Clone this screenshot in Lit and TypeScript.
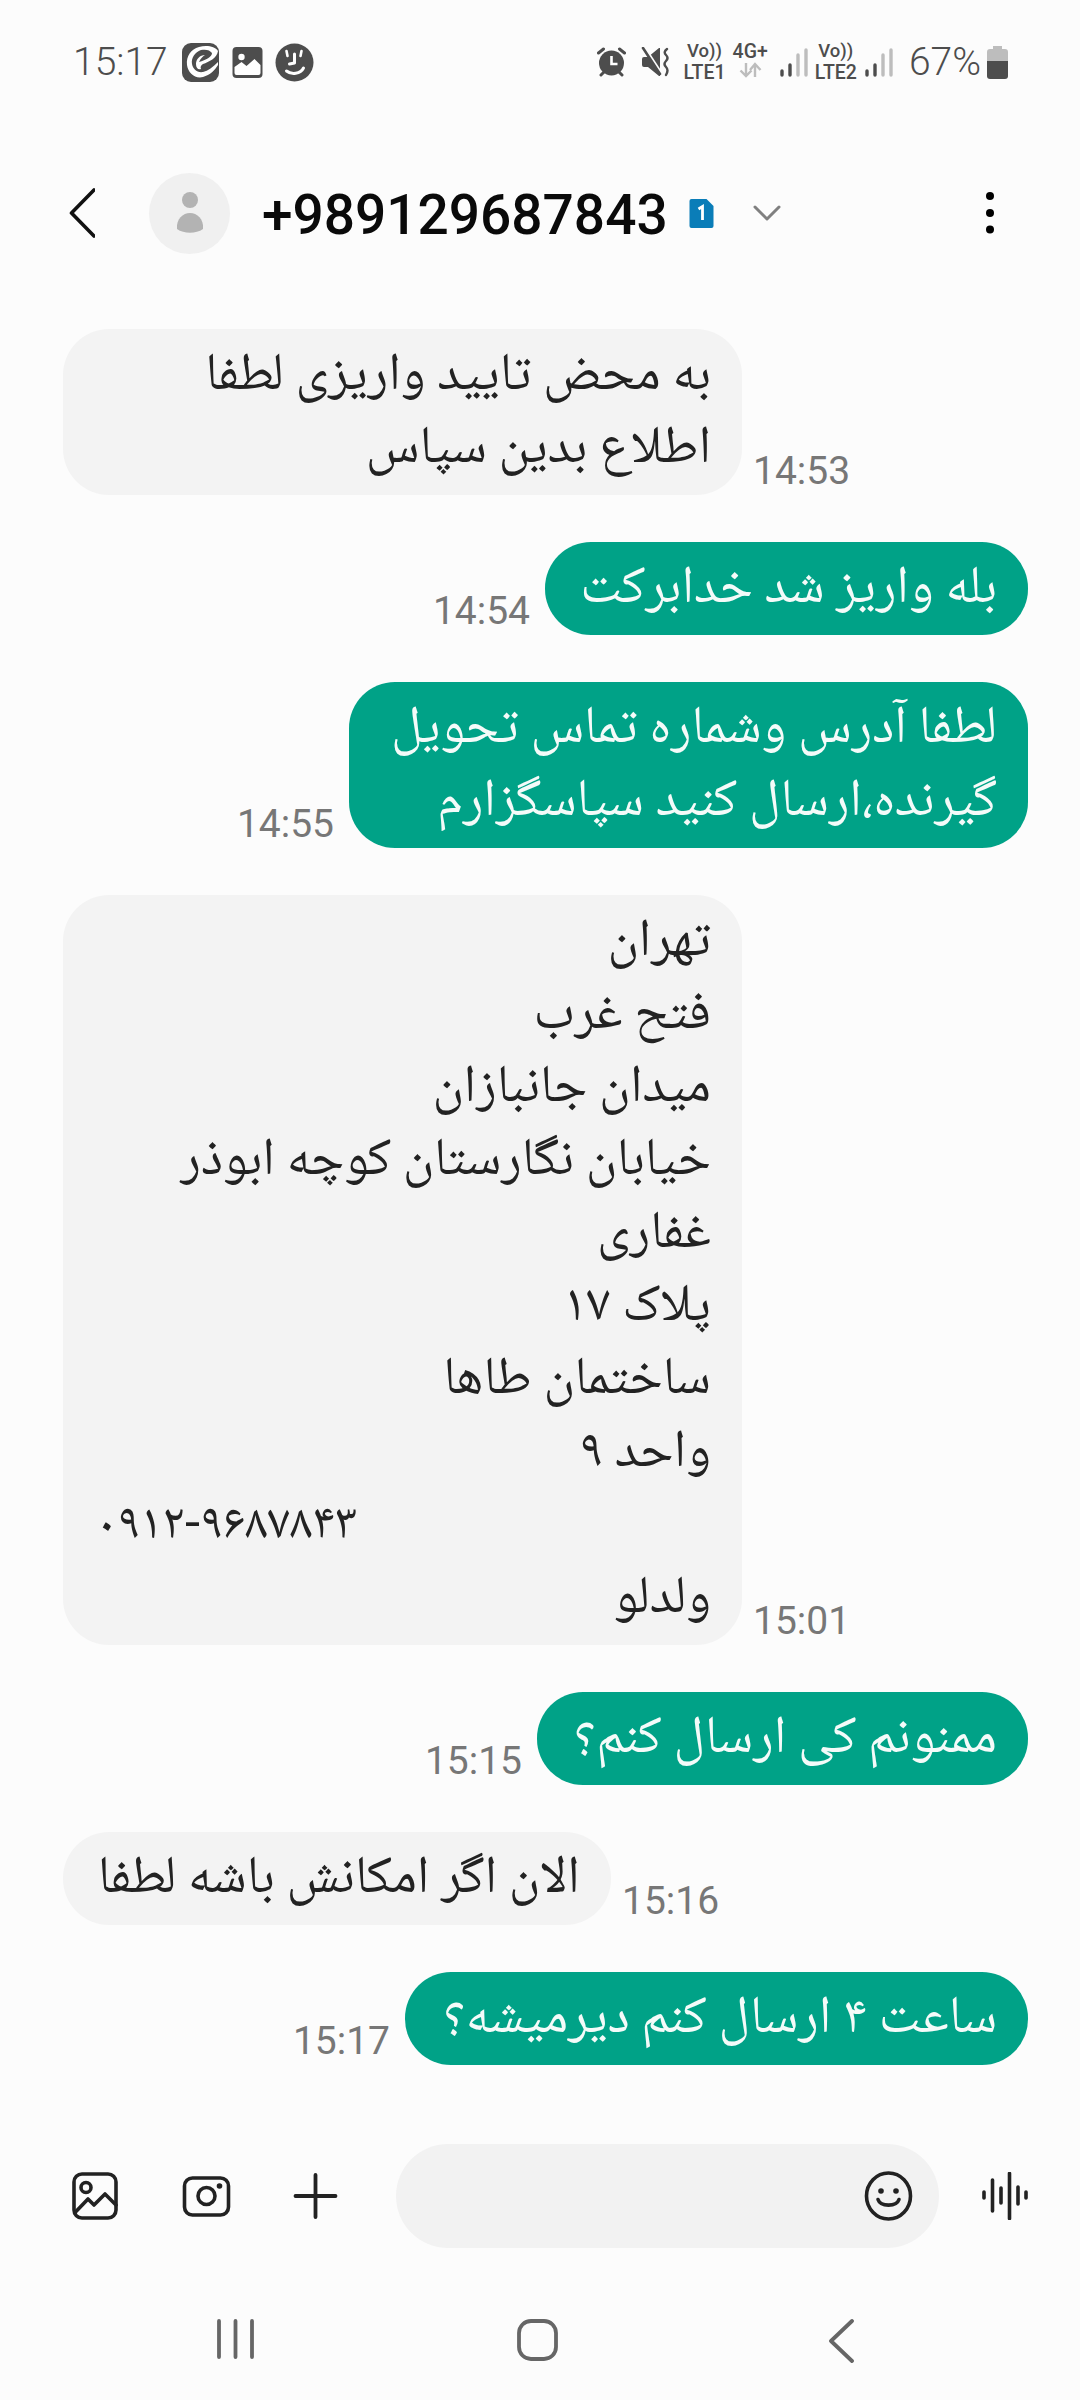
import { LitElement, html, css, svg } from "lit";
import { customElement } from "lit/decorators.js";

interface Msg { out: boolean; time: string; width: number; lines: string[]; }

const MSGS: Msg[] = [
  { out: false, time: "14:53", width: 679, lines: ["به محض تایید واریزی لطفا", "اطلاع بدین سپاس"] },
  { out: true, time: "14:54", width: 483, lines: ["بله واریز شد خدابرکت"] },
  { out: true, time: "14:55", width: 679, lines: ["لطفا آدرس وشماره تماس تحویل", "گیرنده،ارسال کنید سپاسگزارم"] },
  { out: false, time: "15:01", width: 679, lines: ["تهران", "فتح غرب", "میدان جانبازان", "خیابان نگارستان کوچه ابوذر", "غفاری", "پلاک ۱۷", "ساختمان طاها", "واحد ۹", "\u200e۰۹۱۲-۹۶۸۷۸۴۳", "ولدلو"] },
  { out: true, time: "15:15", width: 491, lines: ["ممنونم کی ارسال کنم؟"] },
  { out: false, time: "15:16", width: 548, lines: ["الان اگر امکانش باشه لطفا"] },
  { out: true, time: "15:17", width: 623, lines: ["ساعت ۴ ارسال کنم دیرمیشه؟"] },
];

const signal = svg`<svg width="28" height="30" viewBox="0 0 28 30">
  <g stroke-width="3.4" stroke-linecap="round" fill="none">
    <path d="M2 28v-4" stroke="#4d4d4d"/><path d="M10 28v-10" stroke="#4d4d4d"/>
    <path d="M18 28V8" stroke="#bdbdbd"/><path d="M26 28V3" stroke="#bdbdbd"/>
  </g></svg>`;

@customElement("app-root")
export class AppRoot extends LitElement {
  static styles = css`
    :host { display: block; width: 1080px; height: 2400px; background: #fcfcfc; font-family: Roboto, "Noto Sans", sans-serif; overflow: hidden; }
    .page { display: flex; flex-direction: column; height: 2400px; }
    svg { display: block; flex: none; }
    .status { height: 124px; flex: none; display: flex; align-items: center; padding: 0 72px 0 73px; box-sizing: border-box; color: #4d4d4d; }
    .clock { font-size: 39px; font-weight: 300; line-height: 40px; margin-right: 13px; }
    .sleft { display: flex; align-items: center; gap: 12px; }
    .sright { display: flex; align-items: center; margin-left: auto; }
    .stack { display: flex; flex-direction: column; align-items: center; font-weight: 500; font-size: 19.5px; line-height: 21px; height: 42px; white-space: nowrap; }
    .vo { font-size: 18.5px; }
    .pct { font-size: 39px; font-weight: 300; line-height: 40px; margin: 0 6px 0 16px; }
    .gap15 { margin-left: 15px; } .gap13 { margin-left: 13px; } .gap12 { margin-left: 12px; } .gap8 { margin-left: 8px; } .gap7 { margin-left: 7px; }

    .header { height: 178px; flex: none; display: flex; align-items: center; padding: 0 86px 0 69px; box-sizing: border-box; }
    .avatar { width: 81px; height: 81px; border-radius: 50%; background: #f0f0f0; display: flex; align-items: center; justify-content: center; margin-left: 54px; }
    .title { font-size: 55px; font-weight: 500; color: #0a0a0a; margin-left: 32px; line-height: 64px; padding-top: 3px; white-space: nowrap; }
    .sim { margin-left: 21px; }
    .chev { margin-left: 39px; }
    .dots { margin-left: auto; }

    .msgs { flex: 1; display: flex; flex-direction: column; gap: 47px; padding: 27px 52px 0 63px; }
    .row { display: flex; align-items: flex-end; gap: 11px; }
    .row.out { justify-content: flex-end; gap: 15px; }
    .bubble { box-sizing: border-box; padding: 12px 31px 8px 32px; border-radius: 46px; font-size: 53px; line-height: 73px; direction: rtl; text-align: right; white-space: nowrap; font-family: "Noto Naskh Arabic", "Noto Sans Arabic", "DejaVu Sans", sans-serif; }
    .row.in .bubble { background: #f3f3f3; color: #222; }
    .row.out .bubble { background: #00a287; color: #f4fbf9; }
    .line { height: 73px; }
    .line.ltr { direction: ltr; text-align: left; font-size: 50px; }
    .time { font-size: 39px; line-height: 44px; color: #777; padding-bottom: 2px; }

    .composer { flex: none; height: 104px; display: flex; align-items: center; padding-left: 72px; }
    .pill { width: 543px; height: 104px; border-radius: 52px; background: #f2f2f2; display: flex; align-items: center; justify-content: flex-end; padding-right: 26px; box-sizing: border-box; margin-left: 58px; margin-right: 43px; }
    .g64 { margin-left: 64px; } .g62 { margin-left: 62px; }

    .nav { flex: none; height: 152px; box-sizing: border-box; padding: 71px 0 0 83px; display: grid; grid-template-columns: repeat(3, 303px); justify-items: center; align-items: start; }
  `;

  render() {
    return html`<div class="page">
      <div class="status">
        <span class="clock">15:17</span>
        <div class="sleft">
          <svg width="39" height="39" viewBox="0 0 37 39">
            <rect width="37" height="39" rx="9" fill="#4d4d4d"/>
            <path d="M36 8 C33 3 24 2 17 4 C9 6 4 13 5 22 C6 30 13 36 21 34 C28 32 33 27 36 22 L36 19 C31 24 26 28 21 29 C15 30 11 26 10 21 C9 15 13 9 19 7 C24 6 28 7 30 10 C30 14 24 17 17 19 C19 15 21 13 23 12 C18 12 14 16 14 21 C14 25 16 27 19 26 C18 24 19 22 21 21 C27 19 35 15 36 8Z" fill="#fff"/>
          </svg>
          <svg width="31" height="31" viewBox="0 0 30 31">
            <rect width="30" height="31" rx="4" fill="#4d4d4d"/>
            <circle cx="9" cy="10" r="3.2" fill="#fff"/>
            <path d="M2 26 L2 20 L9 15 L14 19 L22 12 L28 18 L28 26 Q28 28 26 28 L4 28 Q2 28 2 26Z" fill="#fff"/>
          </svg>
          <svg width="39" height="39" viewBox="0 0 38 39">
            <circle cx="19" cy="19.5" r="19" fill="#4d4d4d"/>
            <path d="M11 8l1 5M26 8l-1 5" stroke="#fff" stroke-width="2.6" stroke-linecap="round"/>
            <path d="M19 11 L19 20 L14 21" stroke="#fff" stroke-width="3" fill="none" stroke-linecap="round" stroke-linejoin="round"/>
            <path d="M11 28 C16 32 25 31 28 25" stroke="#fff" stroke-width="3" fill="none" stroke-linecap="round"/>
          </svg>
        </div>
        <div class="sright">
          <svg width="29" height="30" viewBox="0 0 29 30">
            <circle cx="14.5" cy="16" r="12.5" fill="#4d4d4d"/>
            <path d="M14.5 9v8h6" stroke="#fff" stroke-width="2.6" fill="none"/>
            <path d="M1.5 6l5-4M27.5 6l-5-4" stroke="#4d4d4d" stroke-width="3" stroke-linecap="round"/>
            <path d="M4 28l3-3M25 28l-3-3" stroke="#4d4d4d" stroke-width="3" stroke-linecap="round"/>
          </svg>
          <svg class="gap15" width="29" height="30" viewBox="0 0 29 30">
            <path d="M1 12 Q1 10 3 10 L7 10 L18 1 L19 1 L19 29 L18 29 L7 20 L3 20 Q1 20 1 18Z" fill="#4d4d4d"/>
            <path d="M4 1 L21 27" stroke="#fcfcfc" stroke-width="2.4"/>
            <path d="M2 1 L19 27" stroke="#4d4d4d" stroke-width="2.6" stroke-linecap="round"/>
            <path d="M26 2 Q22 5 25 8 Q28 11 25 14 Q22 17 25 20 Q28 23 25 28" stroke="#4d4d4d" stroke-width="2.4" fill="none" stroke-linecap="round"/>
          </svg>
          <div class="stack gap13"><span class="vo">Vo))</span><span>LTE1</span></div>
          <div class="stack gap7">
            <span>4G+</span>
            <svg width="24" height="16" viewBox="0 0 24 16"><path d="M8 1v13M2.5 8.500L8 14l5.500-5.500M17 15V2M12 8L17 2l5.500 6" stroke="#bdbdbd" stroke-width="2.400" fill="none"/></svg>
          </div>
          <span class="gap12">${signal}</span>
          <div class="stack gap7"><span class="vo">Vo))</span><span>LTE2</span></div>
          <span class="gap8">${signal}</span>
          <span class="pct">67%</span>
          <svg width="21" height="33" viewBox="0 0 21 33">
            <path d="M6 0h9v3h3q3 0 3 3v9H0V6q0-3 3-3h3z" fill="#bdbdbd"/>
            <path d="M0 15h21v15q0 3-3 3H3q-3 0-3-3z" fill="#4d4d4d"/>
          </svg>
        </div>
      </div>

      <div class="header">
        <svg width="26" height="52" viewBox="0 0 26 52"><path d="M25 3 L2.5 26 L25 49" stroke="#111" stroke-width="3.6" fill="none" stroke-linecap="round" stroke-linejoin="round"/></svg>
        <div class="avatar">
          <svg width="28" height="42" viewBox="0 0 28 42">
            <circle cx="14" cy="8" r="8" fill="#b3b3b3"/>
            <path d="M1 37 C0 27 7 21 14 21 C21 21 28 27 27 37 C20 42 8 42 1 37Z" fill="#b3b3b3"/>
          </svg>
        </div>
        <span class="title">+989129687843</span>
        <svg class="sim" width="25" height="29" viewBox="0 0 24 29">
          <path d="M2 0H17L24 7V27Q24 29 22 29H2Q0 29 0 27V2Q0 0 2 0Z" fill="#0a7db8"/>
          <path d="M9 10l4-2.5V21" stroke="#fff" stroke-width="2.8" fill="none"/>
        </svg>
        <svg class="chev" width="28" height="16" viewBox="0 0 28 16"><path d="M2 2 L14 14 L26 2" stroke="#808080" stroke-width="3" fill="none" stroke-linecap="round" stroke-linejoin="round"/></svg>
        <svg class="dots" width="8" height="42" viewBox="0 0 8 42"><circle cx="4" cy="4" r="4"/><circle cx="4" cy="21" r="4"/><circle cx="4" cy="37.5" r="4"/></svg>
      </div>

      <div class="msgs">
        ${MSGS.map((m) => html`<div class="row ${m.out ? "out" : "in"}">
          ${m.out ? html`<span class="time">${m.time}</span>` : ""}
          <div class="bubble" style="width:${m.width}px">
            ${m.lines.map((l) => html`<div class="line ${l.startsWith("\u200e") ? "ltr" : ""}">${l}</div>`)}
          </div>
          ${m.out ? "" : html`<span class="time">${m.time}</span>`}
        </div>`)}
      </div>

      <div class="composer">
        <svg width="46" height="48" viewBox="0 0 46 48" fill="none" stroke="#222" stroke-width="3.6" stroke-linecap="round" stroke-linejoin="round">
          <rect x="2" y="2" width="42" height="44" rx="8"/>
          <circle cx="14" cy="15.5" r="5"/>
          <path d="M3.5 40 L16 27 L22 33 L33 22 L44 33"/>
        </svg>
        <svg class="g64" width="49" height="41" viewBox="0 0 48 41" fill="none" stroke="#222" stroke-width="3.6">
          <rect x="2" y="2" width="44" height="37" rx="8"/>
          <circle cx="24" cy="20" r="8.5"/>
          <circle cx="37" cy="10" r="2.8" fill="#222" stroke="none"/>
        </svg>
        <svg class="g62" width="45" height="46" viewBox="0 0 44 46" stroke="#222" stroke-width="3.8" stroke-linecap="round">
          <path d="M22 2V44M2 23H42"/>
        </svg>
        <div class="pill">
          <svg width="49" height="50" viewBox="0 0 48 50" fill="none" stroke="#222" stroke-width="3.6" stroke-linecap="round">
            <ellipse cx="24" cy="25" rx="22" ry="23"/>
            <circle cx="16.5" cy="20" r="2.8" fill="#222" stroke="none"/>
            <circle cx="31.5" cy="20" r="2.8" fill="#222" stroke="none"/>
            <path d="M13.5 28.5 C16 36 32 36 34.5 28.5"/>
          </svg>
        </div>
        <svg width="48" height="48" viewBox="0 0 48 48" stroke="#222" stroke-width="3.6" stroke-linecap="round">
          <path d="M2 20v6M10.5 8v31M19 16v15M27.5 1.5v45M36 15v17M44 20v6"/>
        </svg>
      </div>

      <div class="nav">
        <svg width="38" height="40" viewBox="0 0 38 40" stroke="#666" stroke-width="3.8" stroke-linecap="round"><path d="M3 2v36M19.5 2v36M36 2v36"/></svg>
        <svg width="41" height="42" viewBox="0 0 41 42" fill="none" stroke="#666" stroke-width="3.8"><rect x="2" y="2" width="37" height="38" rx="12"/></svg>
        <svg width="26" height="44" viewBox="0 0 26 44" fill="none" stroke="#666" stroke-width="3.8" stroke-linecap="round" stroke-linejoin="round"><path d="M24 2 L3 22 L24 42"/></svg>
      </div>
    </div>`;
  }
}
